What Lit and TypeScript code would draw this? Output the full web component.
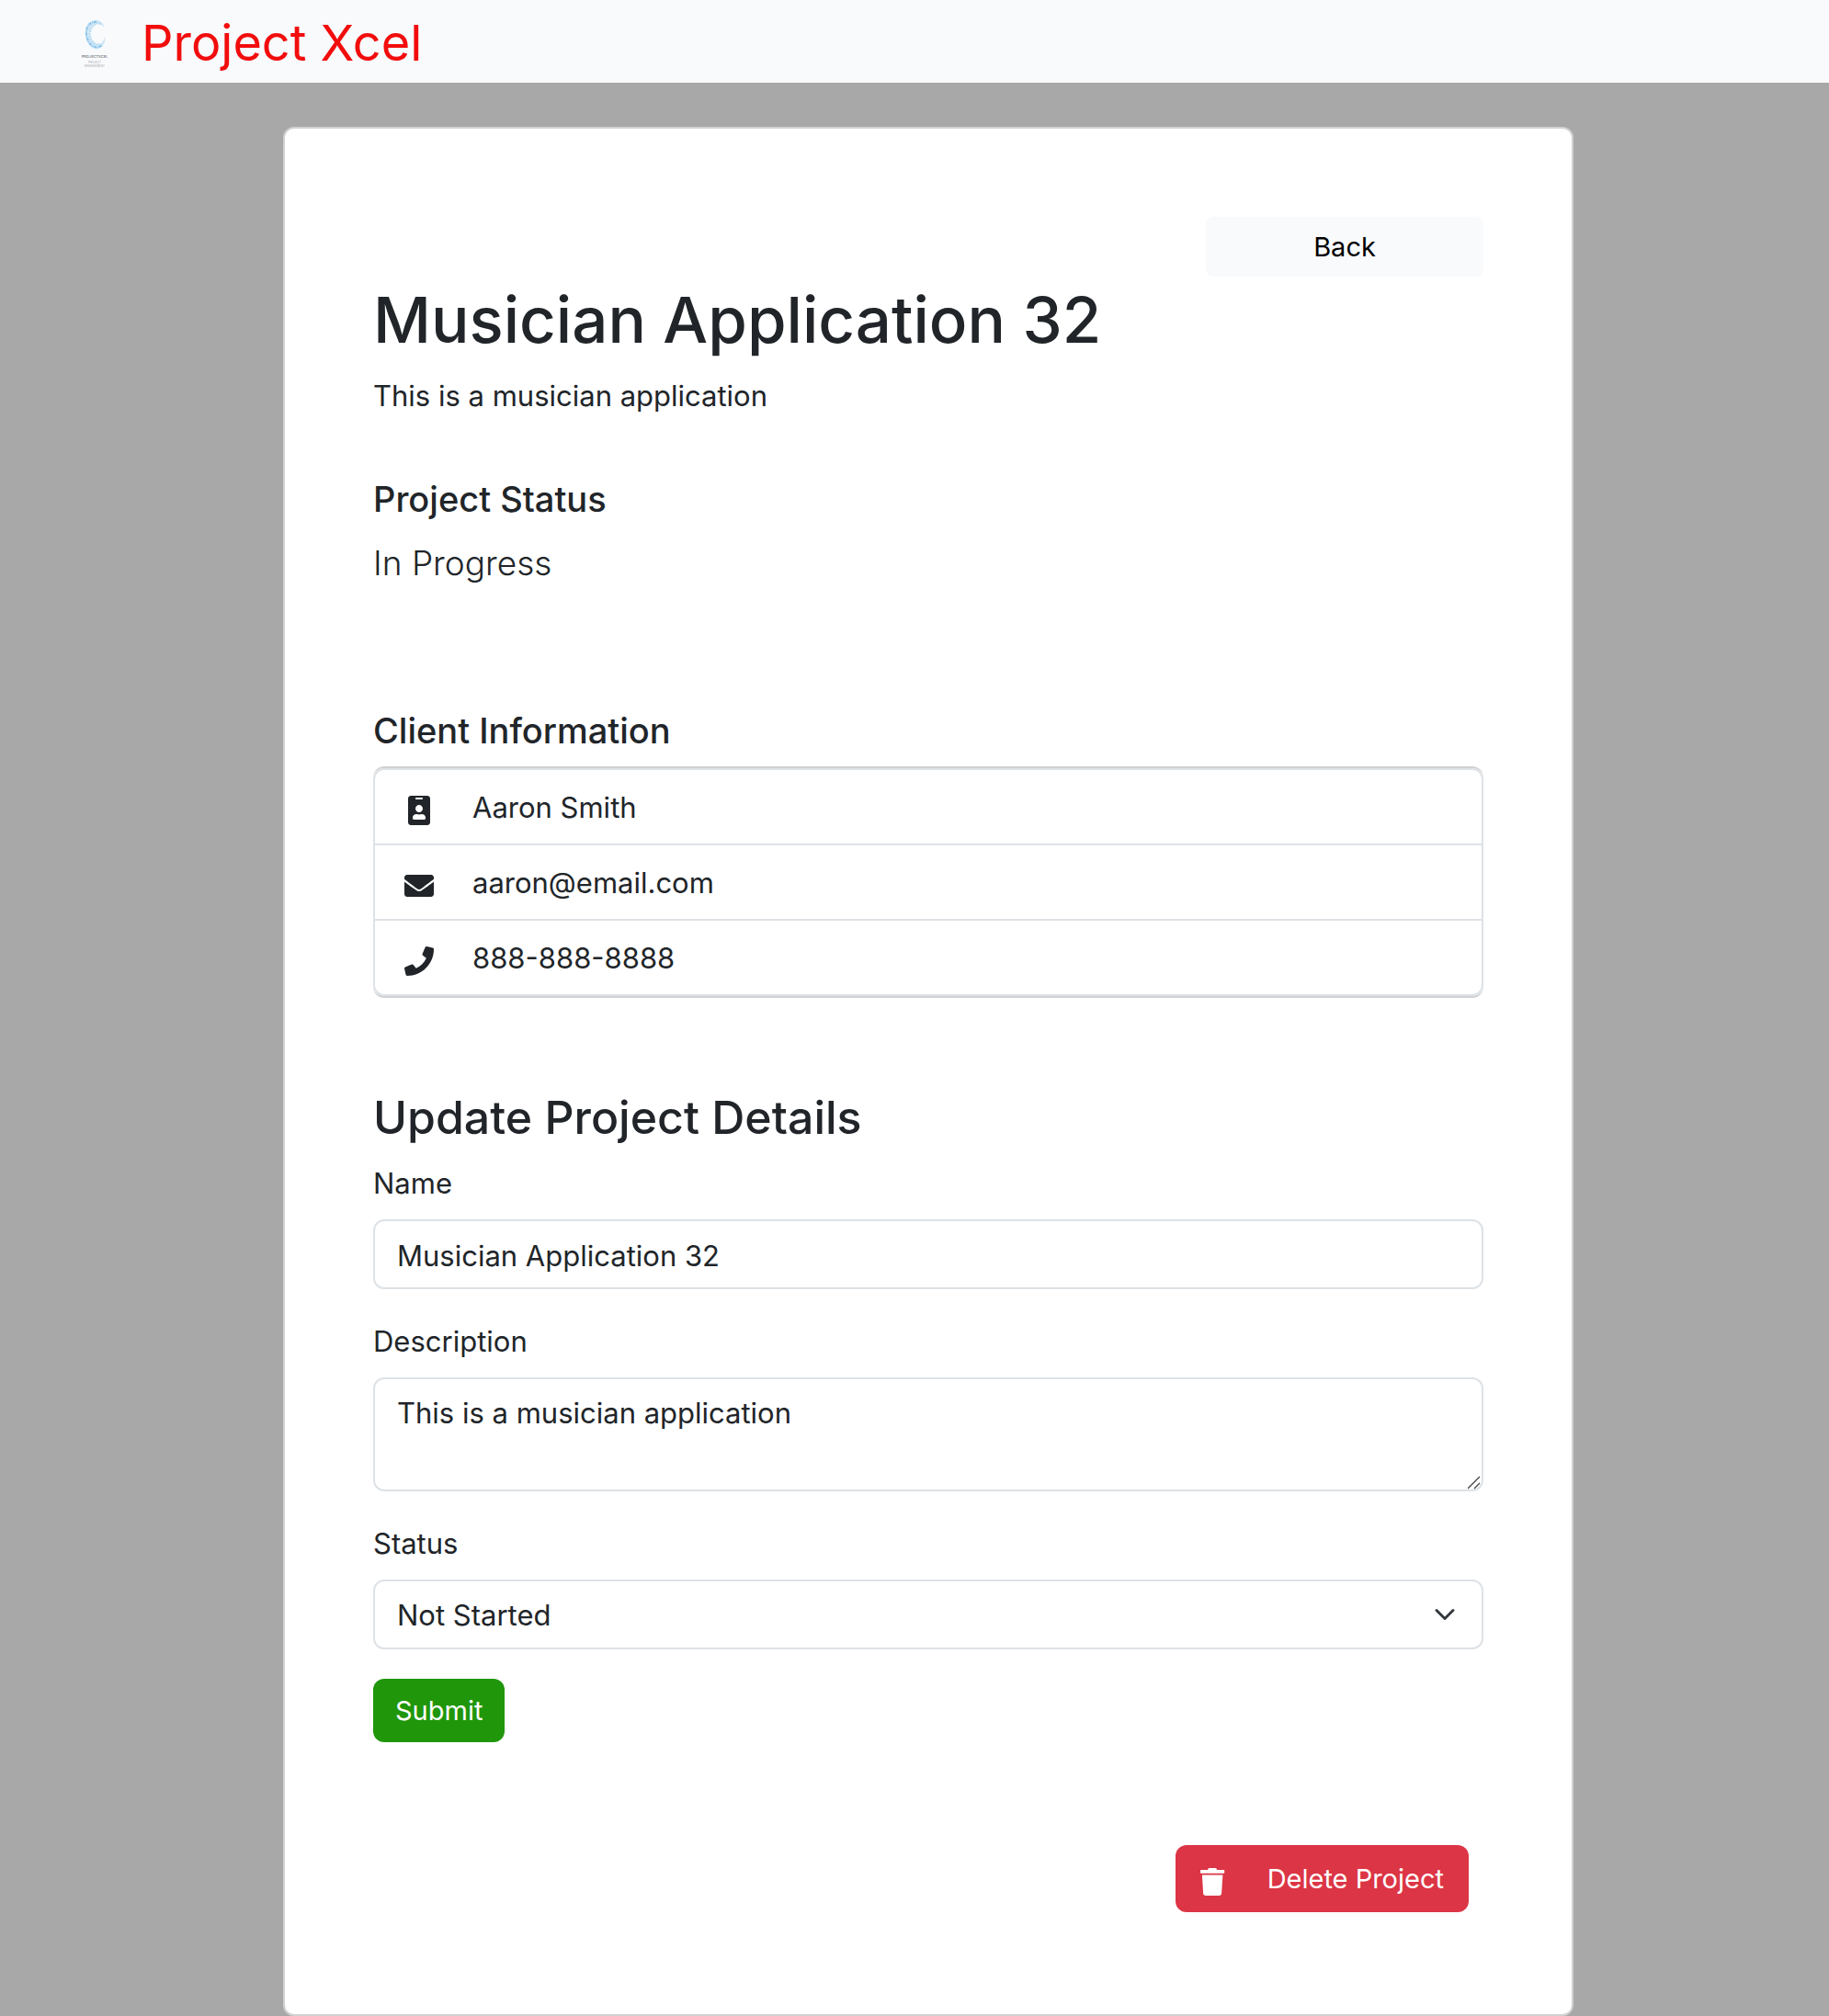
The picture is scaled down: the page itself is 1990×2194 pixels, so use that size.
import { LitElement, html, css, svg } from "lit";
import { customElement, state } from "lit/decorators.js";

const ICONS = {
  badge: {
    box: "0 0 384 512",
    d: "M336 0H48C21.5 0 0 21.5 0 48v416c0 26.5 21.5 48 48 48h288c26.5 0 48-21.5 48-48V48c0-26.5-21.5-48-48-48zM144 32h96c8.8 0 16 7.2 16 16s-7.2 16-16 16h-96c-8.8 0-16-7.2-16-16s7.2-16 16-16zm48 128c35.3 0 64 28.7 64 64s-28.7 64-64 64-64-28.7-64-64 28.7-64 64-64zm112 236.8c0 10.6-10 19.2-22.4 19.2H102.4C90 416 80 407.4 80 396.8v-19.2c0-31.8 30.1-57.6 67.2-57.6h5c12.3 5.1 25.7 8 39.8 8s27.6-2.9 39.8-8h5c37.1 0 67.2 25.8 67.2 57.6v19.2z",
  },
  envelope: {
    box: "0 0 512 512",
    d: "M502.3 190.8c3.9-3.1 9.7-.2 9.7 4.7V400c0 26.5-21.5 48-48 48H48c-26.5 0-48-21.5-48-48V195.6c0-5 5.7-7.8 9.7-4.7 22.4 17.4 52.1 39.5 154.1 113.6 21.1 15.4 56.7 47.8 92.2 47.6 35.7.3 72-32.8 92.3-47.6 102-74.1 131.6-96.3 154-113.7zM256 320c23.2.4 56.6-29.2 73.4-41.4 132.7-96.3 142.8-104.7 173.4-128.7 5.8-4.5 9.2-11.5 9.2-18.9v-19c0-26.5-21.5-48-48-48H48c-26.5 0-48 21.5-48 48v19c0 7.4 3.4 14.3 9.2 18.9 30.6 23.9 40.7 32.4 173.4 128.7 16.8 12.2 50.2 41.8 73.4 41.4z",
  },
  phone: {
    box: "0 0 512 512",
    d: "M493.4 24.6l-104-24c-11.3-2.6-22.9 3.3-27.5 13.9l-48 112c-4.2 9.8-1.4 21.3 6.9 28l60.6 49.6c-36 76.7-98.9 140.5-177.2 177.2l-49.6-60.6c-6.8-8.3-18.2-11.1-28-6.9l-112 48C3.9 366.5-2 378.1.6 389.4l24 104C27.1 504.2 36.7 512 48 512c256.1 0 464-207.5 464-464 0-11.2-7.7-20.9-18.6-23.4z",
  },
  trash: {
    box: "0 0 448 512",
    d: "M432 32H312l-9.4-18.7A24 24 0 0 0 281.1 0H166.8a23.72 23.72 0 0 0-21.4 13.3L136 32H16A16 16 0 0 0 0 48v32a16 16 0 0 0 16 16h416a16 16 0 0 0 16-16V48a16 16 0 0 0-16-16zM53.2 467a48 48 0 0 0 47.9 45h245.8a48 48 0 0 0 47.9-45L416 128H32z",
  },
};

type IconName = keyof typeof ICONS;

const icon = (name: IconName) => html`
  <svg class="icon icon-${name}" viewBox=${ICONS[name].box} aria-hidden="true">
    ${svg`<path d=${ICONS[name].d} fill="currentColor"></path>`}
  </svg>
`;

@customElement("brand-bar")
export class BrandBar extends LitElement {
  static styles = css`
    :host {
      display: block;
    }
    .bar {
      display: flex;
      align-items: center;
      height: 90px;
      padding: 0 86px;
      background: #f8fafc;
    }
    .brand {
      display: flex;
      align-items: center;
      gap: 34px;
      color: #f20d0d;
      font-size: 54px;
      line-height: 64px;
      text-decoration: none;
    }
    .logo {
      width: 34px;
      height: 64px;
    }
    .name {
      padding-top: 4px;
    }
    .mark-name {
      font-size: 4px;
      font-weight: 500;
      fill: #6f7478;
    }
    .mark-sub {
      font-size: 3px;
      fill: #a4a8ac;
    }
  `;

  render() {
    return html`
      <nav class="bar">
        <a class="brand" href="#">
          <svg class="logo" viewBox="0 0 34 64" aria-hidden="true">
            <path
              d="M19 9 C10 8 6 17 7 25 C8 36 15 42 21 40 C27 38 29 32 28 27 C26 34 22 37 18 35 C12 32 10 24 13 17 C15 12 20 10 28 17 C26 12 23 9 19 9Z"
              fill="#cfe6f6"
            ></path>
            <path
              d="M19 11 C9 10 6 21 9 29 C12 38 20 41 25 36"
              fill="none"
              stroke="#86c2e8"
              stroke-width="2"
              stroke-dasharray="3 1 1 1"
            ></path>
            <path
              d="M24 13 C16 10 11 19 12 26 C13 33 19 37 23 35"
              fill="none"
              stroke="#b3daf2"
              stroke-width="2"
              stroke-dasharray="2 1"
            ></path>
            <text class="mark-name" x="17" y="50" text-anchor="middle">PROJECTXCEL</text>
            <text class="mark-sub" x="17" y="56" text-anchor="middle">PROJECT</text>
            <text class="mark-sub" x="17" y="60" text-anchor="middle">MANAGEMENT</text>
          </svg>
          <span class="name">Project Xcel</span>
        </a>
      </nav>
    `;
  }
}

@customElement("app-root")
export class AppRoot extends LitElement {
  @state() private name = "Musician Application 32";
  @state() private description = "This is a musician application";

  private contacts: { icon: IconName; text: string }[] = [
    { icon: "badge", text: "Aaron Smith" },
    { icon: "envelope", text: "aaron@email.com" },
    { icon: "phone", text: "888-888-8888" },
  ];

  private statuses = ["Not Started", "In Progress", "Completed"];

  static styles = css`
    :host {
      display: block;
      min-height: 100vh;
      background: #a8a8a8;
      color: #212529;
      font-family: Inter, "Liberation Sans", sans-serif;
      font-size: 31px;
      line-height: 48px;
    }
    * {
      box-sizing: border-box;
    }
    h1,
    h2,
    h3,
    p,
    ul {
      margin: 0;
      padding: 0;
      font-weight: 500;
    }
    .page {
      padding: 48px 278px 0 308px;
    }
    .card {
      display: flex;
      flex-direction: column;
      padding: 96px 96px 111px;
      border: 2px solid #d1d1d1;
      border-radius: 12px;
      background: #fff;
    }
    button,
    input,
    textarea,
    select {
      margin: 0;
      font: inherit;
      color: inherit;
    }
    .btn {
      border: 0;
      border-radius: 12px;
      font-size: 29px;
      cursor: pointer;
    }
    .back {
      align-self: flex-end;
      width: 25%;
      height: 65px;
      border-radius: 8px;
      background: #f8fafc;
      color: #000;
    }
    .title {
      margin-top: 4px;
      font-size: 69px;
      line-height: 86px;
    }
    .summary {
      margin-top: 16px;
      font-weight: 400;
    }
    .section {
      font-size: 38px;
      line-height: 48px;
    }
    .status {
      margin-top: 64px;
    }
    .lead {
      margin-top: 16px;
      font-size: 37px;
      font-weight: 300;
      line-height: 60px;
    }
    .client {
      margin-top: 128px;
    }
    .contacts {
      margin-top: 15px;
      border: solid #d1d1d1;
      border-width: 2px 0;
      border-radius: 12px;
    }
    .list {
      border: 2px solid #dee2e6;
      border-radius: 12px;
      list-style: none;
    }
    .contact {
      display: flex;
      align-items: center;
      gap: 42px;
      height: 80px;
      padding: 2px 32px 0;
      font-weight: 400;
    }
    .contact + .contact {
      height: 82px;
      border-top: 2px solid #dee2e6;
    }
    .slot {
      display: flex;
      justify-content: center;
      width: 32px;
      padding-top: 6px;
    }
    .icon {
      display: block;
      height: 32px;
    }
    .icon-trash {
      height: 30px;
      margin-top: 6px;
    }
    .heading {
      margin-top: 99px;
      font-size: 50px;
      line-height: 62px;
    }
    .form {
      display: flex;
      flex-direction: column;
      align-items: flex-start;
      gap: 32px;
      margin-top: 16px;
    }
    .field {
      display: flex;
      flex-direction: column;
      gap: 14px;
      width: 100%;
    }
    label {
      line-height: 50px;
    }
    .control {
      display: block;
      width: 100%;
      height: 76px;
      padding: 13px 24px 11px;
      border: 2px solid #dee2e6;
      border-radius: 12px;
      background: #fff;
    }
    .area {
      height: 124px;
      resize: vertical;
    }
    .area::-webkit-resizer {
      background: url("data:image/svg+xml,%3Csvg xmlns='http://www.w3.org/2000/svg' viewBox='0 0 15 15'%3E%3Cpath d='M0 14L13 1M7 14L13 8' stroke='%23444' stroke-width='1.300'/%3E%3C/svg%3E")
        no-repeat;
    }
    .pick {
      display: grid;
    }
    .pick > * {
      grid-area: 1 / 1;
    }
    .select {
      appearance: none;
    }
    .chevron {
      place-self: center end;
      width: 24px;
      height: 24px;
      margin-right: 30px;
      pointer-events: none;
    }
    .submit {
      height: 69px;
      padding: 0 24px;
      background: #20960b;
      color: #fff;
    }
    .delete {
      display: flex;
      align-self: flex-end;
      align-items: center;
      gap: 46px;
      height: 73px;
      margin: 112px 16px 0 0;
      padding: 0 27px;
      background: #dc3545;
      color: #fff;
    }
  `;

  render() {
    return html`
      <brand-bar></brand-bar>
      <main class="page">
        <article class="card">
          <button class="btn back" type="button">Back</button>
          <h1 class="title">Musician Application 32</h1>
          <p class="summary">This is a musician application</p>

          <h3 class="section status">Project Status</h3>
          <p class="lead">In Progress</p>

          <h3 class="section client">Client Information</h3>
          <div class="contacts">
            <ul class="list">
              ${this.contacts.map(
                (c) => html`
                  <li class="contact">
                    <span class="slot">${icon(c.icon)}</span>
                    <span>${c.text}</span>
                  </li>
                `,
              )}
            </ul>
          </div>

          <h2 class="heading">Update Project Details</h2>
          <form class="form" @submit=${(e: Event) => e.preventDefault()}>
            <div class="field">
              <label for="name">Name</label>
              <input
                id="name"
                class="control"
                type="text"
                .value=${this.name}
                @input=${(e: Event) => (this.name = (e.target as HTMLInputElement).value)}
              />
            </div>
            <div class="field">
              <label for="description">Description</label>
              <textarea
                id="description"
                class="control area"
                .value=${this.description}
                @input=${(e: Event) =>
                  (this.description = (e.target as HTMLTextAreaElement).value)}
              ></textarea>
            </div>
            <div class="field">
              <label for="status">Status</label>
              <div class="pick">
                <select id="status" class="control select">
                  ${this.statuses.map((s) => html`<option>${s}</option>`)}
                </select>
                <svg class="chevron" viewBox="0 0 16 16" aria-hidden="true">
                  <path
                    d="m2 5 6 6 6-6"
                    fill="none"
                    stroke="#343a40"
                    stroke-linecap="round"
                    stroke-linejoin="round"
                    stroke-width="2"
                  ></path>
                </svg>
              </div>
            </div>
            <button class="btn submit" type="submit">Submit</button>
          </form>

          <button class="btn delete" type="button">
            ${icon("trash")}
            <span>Delete Project</span>
          </button>
        </article>
      </main>
    `;
  }
}
